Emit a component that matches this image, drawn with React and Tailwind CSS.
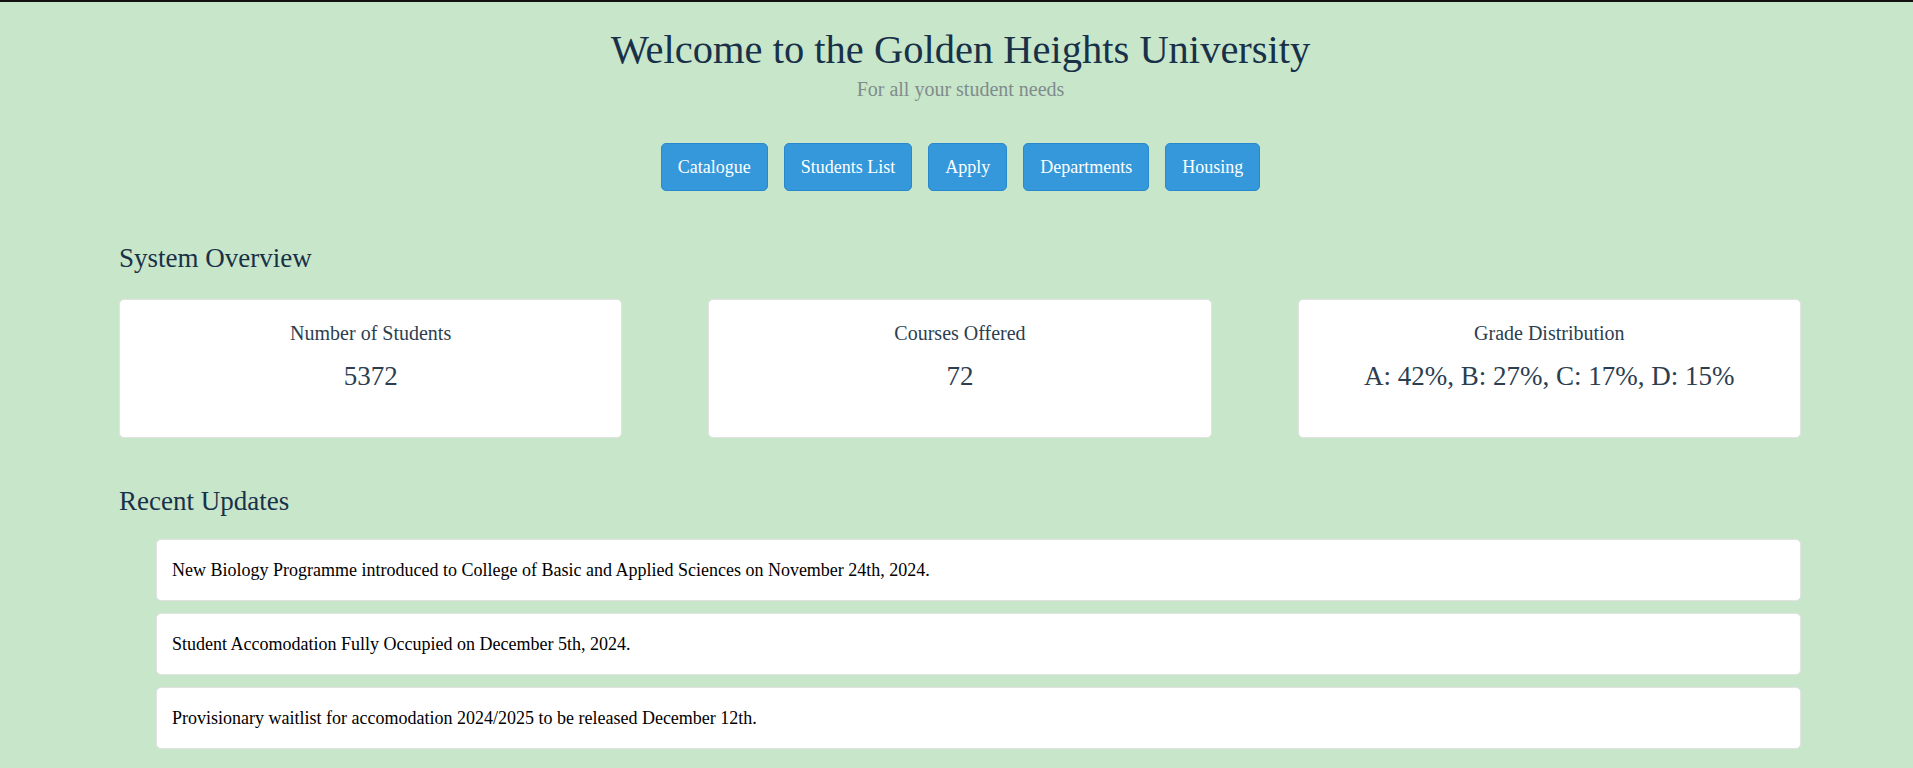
import React from 'react';

const links = ['Catalogue', 'Students List', 'Apply', 'Departments', 'Housing'];

const stats = [
  { label: 'Number of Students', value: '5372' },
  { label: 'Courses Offered', value: '72' },
  { label: 'Grade Distribution', value: 'A: 42%, B: 27%, C: 17%, D: 15%' },
];

const updates = [
  'New Biology Programme introduced to College of Basic and Applied Sciences on November 24th, 2024.',
  'Student Accomodation Fully Occupied on December 5th, 2024.',
  'Provisionary waitlist for accomodation 2024/2025 to be released December 12th.',
];

export default function App() {
  return (
    <div className="min-h-screen border-t-2 border-[#111] bg-[#c8e6c9] pb-[20px] font-['Liberation_Serif','Times_New_Roman',serif]">
      <header className="pl-[8px] pt-[25px] text-center">
        <h1 className="text-[40.5px] leading-[46px] text-[#183149]">Welcome to the Golden Heights University</h1>
        <p className="mt-[4px] text-[20px] leading-[24px] text-[#7f8c8d]">For all your student needs</p>
      </header>

      <nav className="mt-[42px] flex justify-center gap-[16px] pl-[8px]">
        {links.map((l) => (
          <button
            key={l}
            type="button"
            className="h-[48px] rounded-[5px] border border-[#2a88cc] bg-[#3498db] px-[16px] text-[18px] text-white"
          >
            {l}
          </button>
        ))}
      </nav>

      <main className="pl-[119px] pr-[112px]">
        <h2 className="mt-[52px] text-[27px] leading-[31px] text-[#183149]">System Overview</h2>
        <div className="mt-[25px] grid grid-cols-3 gap-[86px]">
          {stats.map((s) => (
            <div
              key={s.label}
              className="h-[139px] rounded-[5px] border border-[#e2e2e2] bg-white pt-[21px] text-center text-[#2c3e50]"
            >
              <h3 className="text-[20px] leading-[24px]">{s.label}</h3>
              <p className="mt-[16px] text-[27px] leading-[31px]">{s.value}</p>
            </div>
          ))}
        </div>

        <h2 className="mt-[48px] text-[27px] leading-[31px] text-[#183149]">Recent Updates</h2>
        <ul className="mt-[22px] flex flex-col gap-[12px] pl-[37px]">
          {updates.map((u) => (
            <li
              key={u}
              className="flex h-[62px] items-center rounded-[5px] border border-[#e2e2e2] bg-white px-[15px] text-[18px] text-black"
            >
              {u}
            </li>
          ))}
        </ul>
      </main>
    </div>
  );
}
